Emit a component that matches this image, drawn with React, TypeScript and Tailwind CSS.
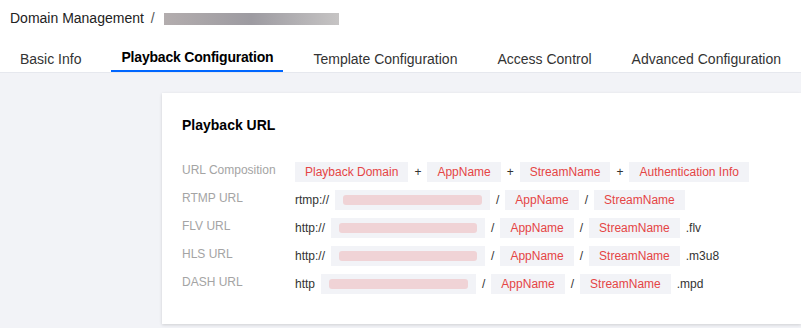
const font = { fontFamily: '"Liberation Sans", Arial, sans-serif' }

function Tag({ children }: { children: React.ReactNode }) {
  return <span className="inline-flex h-5 items-center bg-[#f2f3f7] px-[10px] text-[#e54545]">{children}</span>
}

function Blur({ w }: { w: number }) {
  return (
    <span className="inline-flex h-5 items-center bg-[#f2f3f7] px-2" style={{ width: w }}>
      <span className="h-[10px] w-full rounded-[3px] bg-[#f0d3d6]" />
    </span>
  )
}

function Row({ label, children }: { label: string; children: React.ReactNode }) {
  return (
    <div className="flex h-5 items-center">
      <div className="mb-[4px] w-[113px] shrink-0 leading-4 text-[#a4a4a4]">{label}</div>
      <div className="flex items-center gap-[6px] whitespace-nowrap text-[#333]">{children}</div>
    </div>
  )
}

export default function App() {
  const tabs = ["Basic Info", "Playback Configuration", "Template Configuration", "Access Control", "Advanced Configuration"]
  return (
    <div className="h-[328px] w-[801px] overflow-hidden bg-[#f2f3f7]" style={font}>
      <div className="bg-white">
        <div className="flex h-[37px] items-center pl-[10px] text-[14px] text-[#222]">
          Domain Management
          <span className="ml-[7px] text-[#555]">/</span>
          <span className="ml-[9px] h-[12px] w-[175px] bg-gradient-to-r from-[#b3adae] via-[#9d9ba1] to-[#c6c4c4]" />
        </div>
        <div className="flex h-[36px] border-b border-[#e6e8ee] pl-[10px] text-[14px] text-[#333]">
          {tabs.map((t, i) => (
            <div
              key={t}
              className={
                i === 1
                  ? "mr-5 flex shrink-0 items-center whitespace-nowrap border-b-2 border-[#0066ff] px-[10px] pt-[8px] font-bold tracking-[-0.2px] text-black"
                  : "mr-5 flex shrink-0 items-center whitespace-nowrap px-[10px] pt-[10px]"
              }
            >
              {t}
            </div>
          ))}
        </div>
      </div>
      <div className="pl-[162px] pt-[20px]">
        <div className="h-[231px] bg-white pl-[20px] pt-[22px] shadow-[0_1px_3px_rgba(0,0,0,0.15)]">
          <div className="text-[14px] font-bold text-black">Playback URL</div>
          <div className="mt-[26px] flex flex-col gap-[8px] text-[12px]">
            <Row label="URL Composition">
              <Tag>Playback Domain</Tag>+<Tag>AppName</Tag>+<Tag>StreamName</Tag>+<Tag>Authentication Info</Tag>
            </Row>
            <Row label="RTMP URL">
              rtmp://<Blur w={155} />/<Tag>AppName</Tag>/<Tag>StreamName</Tag>
            </Row>
            <Row label="FLV URL">
              http://<Blur w={154} />/<Tag>AppName</Tag>/<Tag>StreamName</Tag>.flv
            </Row>
            <Row label="HLS URL">
              http://<Blur w={154} />/<Tag>AppName</Tag>/<Tag>StreamName</Tag>.m3u8
            </Row>
            <Row label="DASH URL">
              http<Blur w={155} />/<Tag>AppName</Tag>/<Tag>StreamName</Tag>.mpd
            </Row>
          </div>
        </div>
      </div>
    </div>
  )
}
